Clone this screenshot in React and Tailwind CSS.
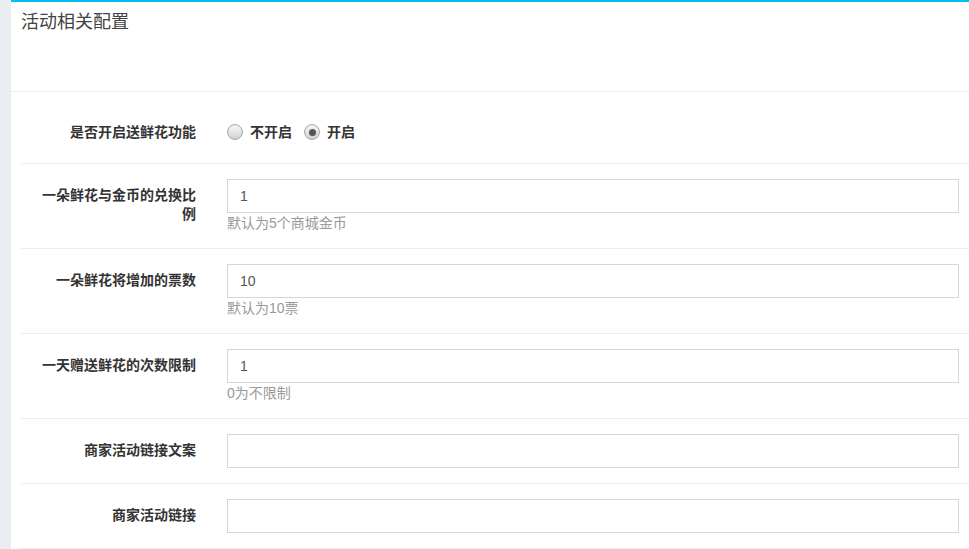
import React from 'react';

const font = { fontFamily: '"Liberation Sans", "Noto Sans CJK SC", sans-serif' };

const Radio = ({ checked, label }) => (
  <label className="flex items-center gap-[7px] mr-[12px]">
    <span className="w-[16px] h-[16px] rounded-full border border-[#a9a9a9] bg-gradient-to-b from-[#fafafa] to-[#d0d0d0] flex items-center justify-center shadow-[inset_0_1px_1px_rgba(0,0,0,0.08)]">
      {checked && <span className="w-[7px] h-[7px] rounded-full bg-[#555]" />}
    </span>
    <span className="text-[14px] font-bold text-[#333] leading-[20px]">{label}</span>
  </label>
);

const Row = ({ label, children, help }) => (
  <div className="flex border-b border-[#eeeeee] py-[15px]">
    <div className="w-[206px] shrink-0 pl-[15px] pr-[31px] pt-[7px] text-right text-[14px] font-bold text-[#333] leading-[19px]">
      {label}
    </div>
    <div className="flex-1 pr-[10px]">
      {children}
      {help && <div className="text-[14px] text-[#999] leading-[20px]">{help}</div>}
    </div>
  </div>
);

const Input = ({ value }) => (
  <input
    defaultValue={value}
    className="block w-full h-[34px] border border-[#d2d6de] px-[12px] text-[14px] text-[#555] outline-none"
    style={font}
  />
);

export default function App() {
  const fields = [
    { label: '一朵鲜花与金币的兑换比例', value: '1', help: '默认为5个商城金币' },
    { label: '一朵鲜花将增加的票数', value: '10', help: '默认为10票' },
    { label: '一天赠送鲜花的次数限制', value: '1', help: '0为不限制' },
    { label: '商家活动链接文案', value: '' },
    { label: '商家活动链接', value: '' },
  ];

  return (
    <div className="flex min-h-[549px] bg-[#ecf0f5]" style={font}>
      <div className="w-[11px] shrink-0 bg-[#eaeef3]" />
      <div className="flex-1 bg-white border-t-2 border-[#00c0ef]">
        <div className="h-[90px] border-b border-[#f0f0f0] pl-[10px] pt-[9px]">
          <h3 className="text-[18px] text-[#444] leading-[22px]">活动相关配置</h3>
        </div>
        <div className="pl-[10px]">
          <div className="flex items-center border-b border-[#eeeeee] h-[72px] pt-[9px]">
            <div className="w-[206px] shrink-0 pl-[15px] pr-[31px] text-right text-[14px] font-bold text-[#333] leading-[20px]">
              是否开启送鲜花功能
            </div>
            <div className="flex items-center">
              <Radio label="不开启" />
              <Radio checked label="开启" />
            </div>
          </div>
          {fields.map((f) => (
            <Row key={f.label} label={f.label} help={f.help}>
              <Input value={f.value} />
            </Row>
          ))}
        </div>
      </div>
    </div>
  );
}
